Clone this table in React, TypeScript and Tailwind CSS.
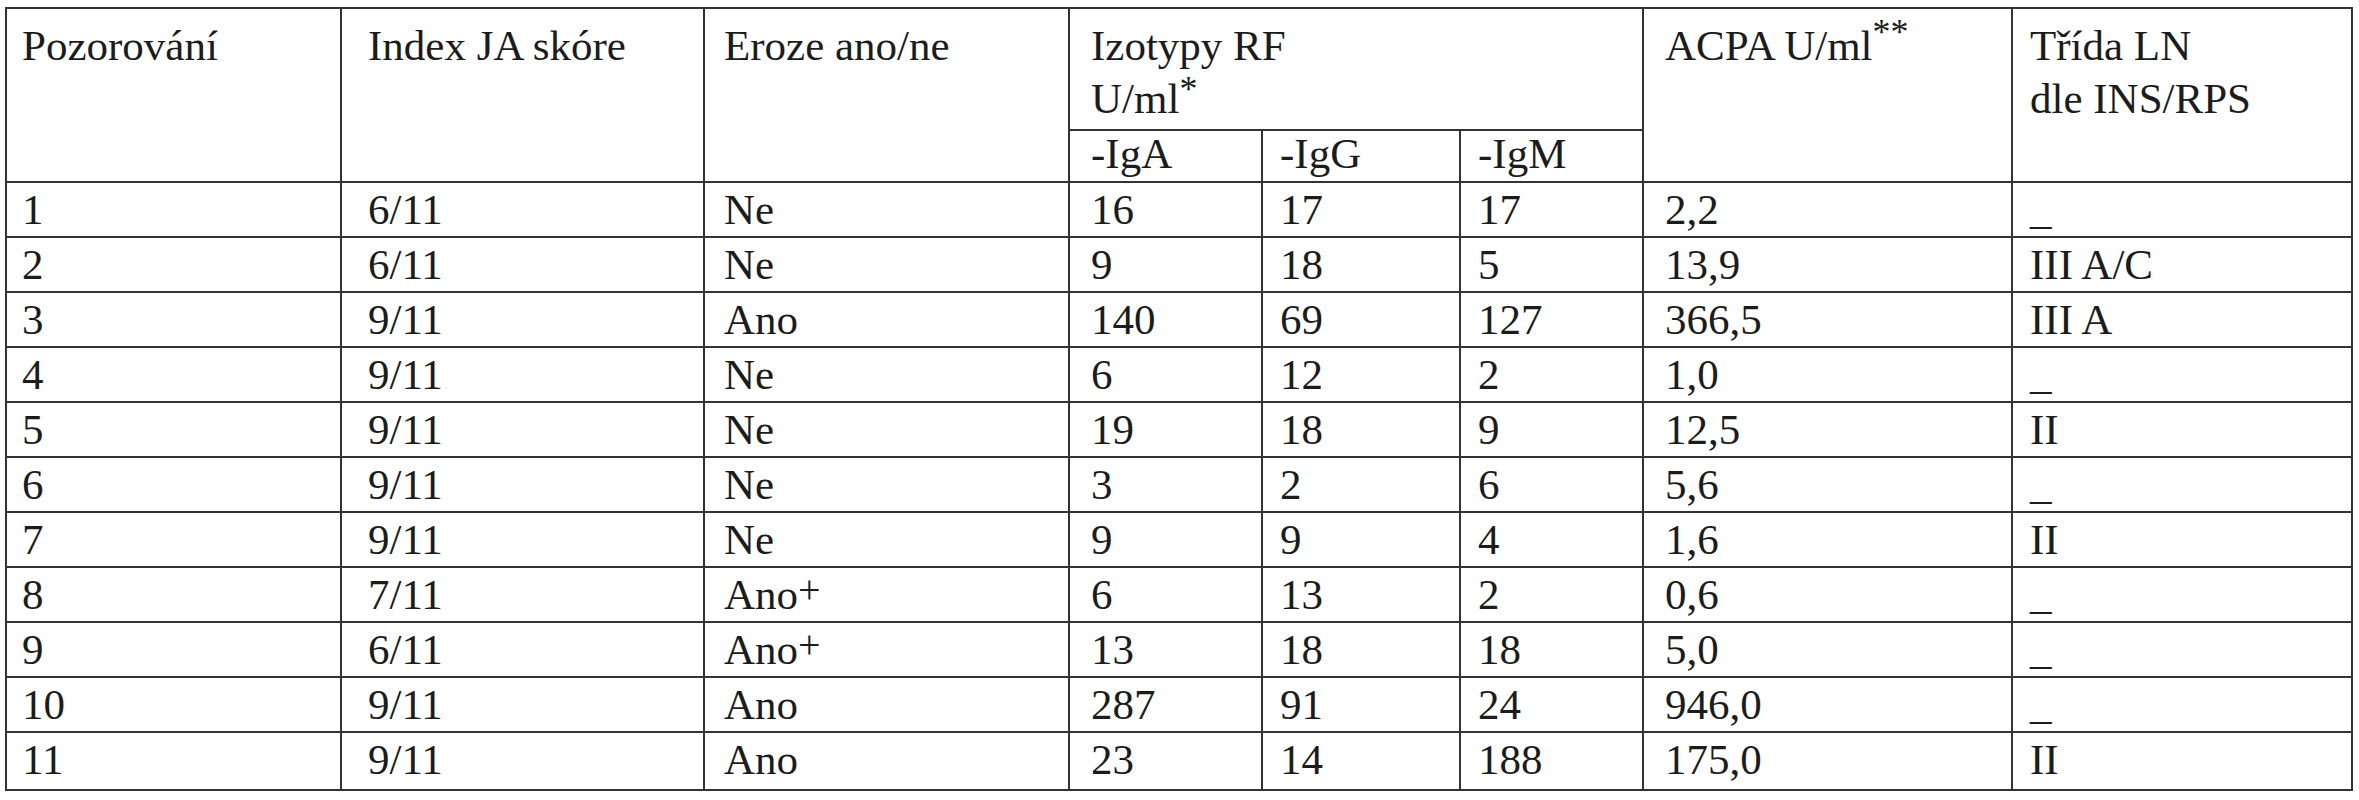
import React from 'react'

// observation table – RF isotypes, ACPA, LN class
const rows = [
    ['1', '6/11', 'Ne', '16', '17', '17', '2,2', '_'],
    ['2', '6/11', 'Ne', '9', '18', '5', '13,9', 'III A/C'],
    ['3', '9/11', 'Ano', '140', '69', '127', '366,5', 'III A'],
    ['4', '9/11', 'Ne', '6', '12', '2', '1,0', '_'],
    ['5', '9/11', 'Ne', '19', '18', '9', '12,5', 'II'],
    ['6', '9/11', 'Ne', '3', '2', '6', '5,6', '_'],
    ['7', '9/11', 'Ne', '9', '9', '4', '1,6', 'II'],
    ['8', '7/11', 'Ano+', '6', '13', '2', '0,6', '_'],
    ['9', '6/11', 'Ano+', '13', '18', '18', '5,0', '_'],
    ['10', '9/11', 'Ano', '287', '91', '24', '946,0', '_'],
    ['11', '9/11', 'Ano', '23', '14', '188', '175,0', 'II'],
]

const pad = ['pl-[15px]', 'pl-[26px]', 'pl-[19px]', 'pl-[21px]', 'pl-[17px]', 'pl-[17px]', 'pl-[21px]', 'pl-[17px]']

function Sup({ children, lift }: { children: React.ReactNode; lift: string }) {
    return <span className={`text-[36px] leading-[0] ${lift}`}>{children}</span>
}

function Cell({ value, col }: { value: string; col: number }) {
    const plus = value.endsWith('+')
    return (
        <div className={`bg-white pt-[5px] leading-[43px] ${pad[col]}`}>
            {plus ? (
                <>
                    {value.slice(0, -1)}
                    <span className="text-[40px] leading-[0] align-[6px]">+</span>
                </>
            ) : (
                value
            )}
        </div>
    )
}

export default function App() {
    return (
        <div className="bg-white w-[2359px] h-[800px] pt-[7px] pl-[5px] text-[#1c1c1c] [font-family:Liberation_Serif,serif] text-[43px]">
            <div className="inline-grid bg-[#333] p-[2px] gap-[2px] grid-cols-[333px_361px_363px_191px_196px_181px_367px_338px] grid-rows-[120px_50px_repeat(10,53px)_56px]">
                {/* header */}
                <div className="row-span-2 bg-white pt-[10px] leading-[53px] pl-[15px]">Pozorování</div>
                <div className="row-span-2 bg-white pt-[10px] leading-[53px] pl-[26px]">Index JA skóre</div>
                <div className="row-span-2 bg-white pt-[10px] leading-[53px] pl-[19px]">Eroze ano/ne</div>
                <div className="col-span-3 bg-white pt-[10px] leading-[53px] pl-[21px]">
                    <div>Izotypy RF</div>
                    <div>
                        U/ml<Sup lift="align-[12px]">*</Sup>
                    </div>
                </div>
                <div className="row-span-2 bg-white pt-[10px] leading-[53px] pl-[21px]">
                    ACPA U/ml<Sup lift="align-[16px]">**</Sup>
                </div>
                <div className="row-span-2 bg-white pt-[10px] leading-[53px] pl-[17px]">
                    <div>Třída LN</div>
                    <div>dle INS/RPS</div>
                </div>
                <div className="bg-white pt-[1px] leading-[43px] pl-[21px]">-IgA</div>
                <div className="bg-white pt-[1px] leading-[43px] pl-[17px]">-IgG</div>
                <div className="bg-white pt-[1px] leading-[43px] pl-[17px]">-IgM</div>

                {/* rows */}
                {rows.map((r) => r.map((v, i) => <Cell key={r[0] + '-' + i} value={v} col={i} />))}
            </div>
        </div>
    )
}
